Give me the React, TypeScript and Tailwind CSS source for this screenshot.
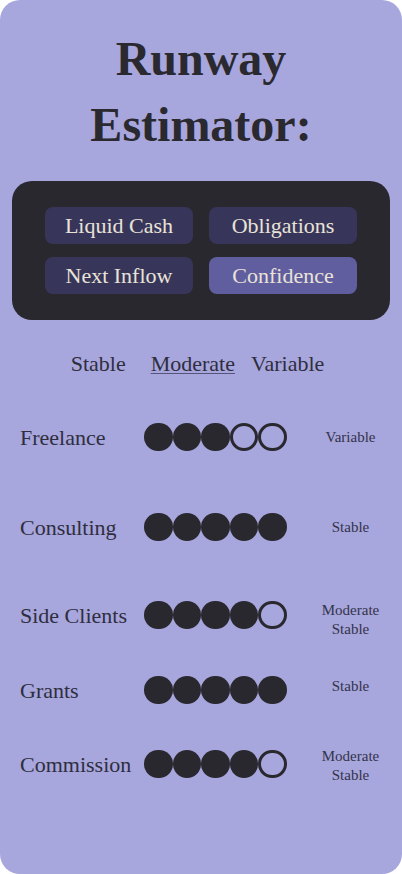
const serif = { fontFamily: '"Liberation Serif", "DejaVu Serif", serif' }

const buttons = [
  { label: 'Liquid Cash', active: false },
  { label: 'Obligations', active: false },
  { label: 'Next Inflow', active: false },
  { label: 'Confidence', active: true },
]

const rows = [
  { name: 'Freelance', filled: 3, status: ['Variable'], gap: 'mt-[40px]', shift: '' },
  { name: 'Consulting', filled: 5, status: ['Stable'], gap: 'mt-[50px]', shift: '' },
  { name: 'Side Clients', filled: 4, status: ['Moderate', 'Stable'], gap: 'mt-[48px]', shift: 'mt-[9px]' },
  { name: 'Grants', filled: 5, status: ['Stable'], gap: 'mt-[35px]', shift: '-mt-[8px]' },
  { name: 'Commission', filled: 4, status: ['Moderate', 'Stable'], gap: 'mt-[34px]', shift: 'mt-[4px]' },
]

const Dots = ({ filled }: { filled: number }) => (
  <div className="flex">
    {[0, 1, 2, 3, 4].map((i) =>
      i < filled ? (
        <span key={i} className="block w-[28.5px] h-[28.5px] rounded-full bg-[#29282e]" />
      ) : (
        <span key={i} className="block w-[28.5px] h-[28.5px] rounded-full border-[3px] border-[#29282e]" />
      )
    )}
  </div>
)

export default function App() {
  return (
    <div className="bg-white w-[402px] h-[874px]" style={serif}>
      <div className="w-[402px] h-[874px] bg-[#a7a6dd] rounded-[20px] overflow-hidden flex flex-col">
        <h1 className="pt-[26px] text-center text-[48px] leading-[66px] font-bold text-[#2a2930]">
          Runway
          <br />
          Estimator:
        </h1>

        <div className="mt-[23px] mx-3 bg-[#29282e] rounded-[20px] px-[33px] py-[26px] grid grid-cols-2 gap-x-4 gap-y-[13px]">
          {buttons.map((b) => (
            <div
              key={b.label}
              className={
                b.active
                  ? 'h-[37px] rounded-lg bg-[#605e9f] text-[#e9e3d8] text-[22px] flex items-center justify-center'
                  : 'h-[37px] rounded-lg bg-[#37365a] text-[#e9e3d8] text-[22px] flex items-center justify-center'
              }
            >
              {b.label}
            </div>
          ))}
        </div>

        <div className="mt-[31px] flex justify-center text-[22px] leading-[26px] text-[#2f2e3e] pr-[7px]">
          <span className="mr-[25px]">Stable</span>
          <span className="mr-4 underline decoration-1 underline-offset-2 decoration-[#55547a]">Moderate</span>
          <span>Variable</span>
        </div>

        <div className="flex flex-col">
          {rows.map((r) => (
            <div key={r.name} className={`${r.gap} h-[40px] flex items-center pl-5`}>
              <div className="w-[124px] text-[22px] text-[#2f2e3e] whitespace-nowrap">{r.name}</div>
              <Dots filled={r.filled} />
              <div className={`${r.shift} ml-[14px] w-[100px] text-center text-[15px] leading-[19px] text-[#34334a]`}>
                {r.status.map((s) => (
                  <div key={s}>{s}</div>
                ))}
              </div>
            </div>
          ))}
        </div>
      </div>
    </div>
  )
}
